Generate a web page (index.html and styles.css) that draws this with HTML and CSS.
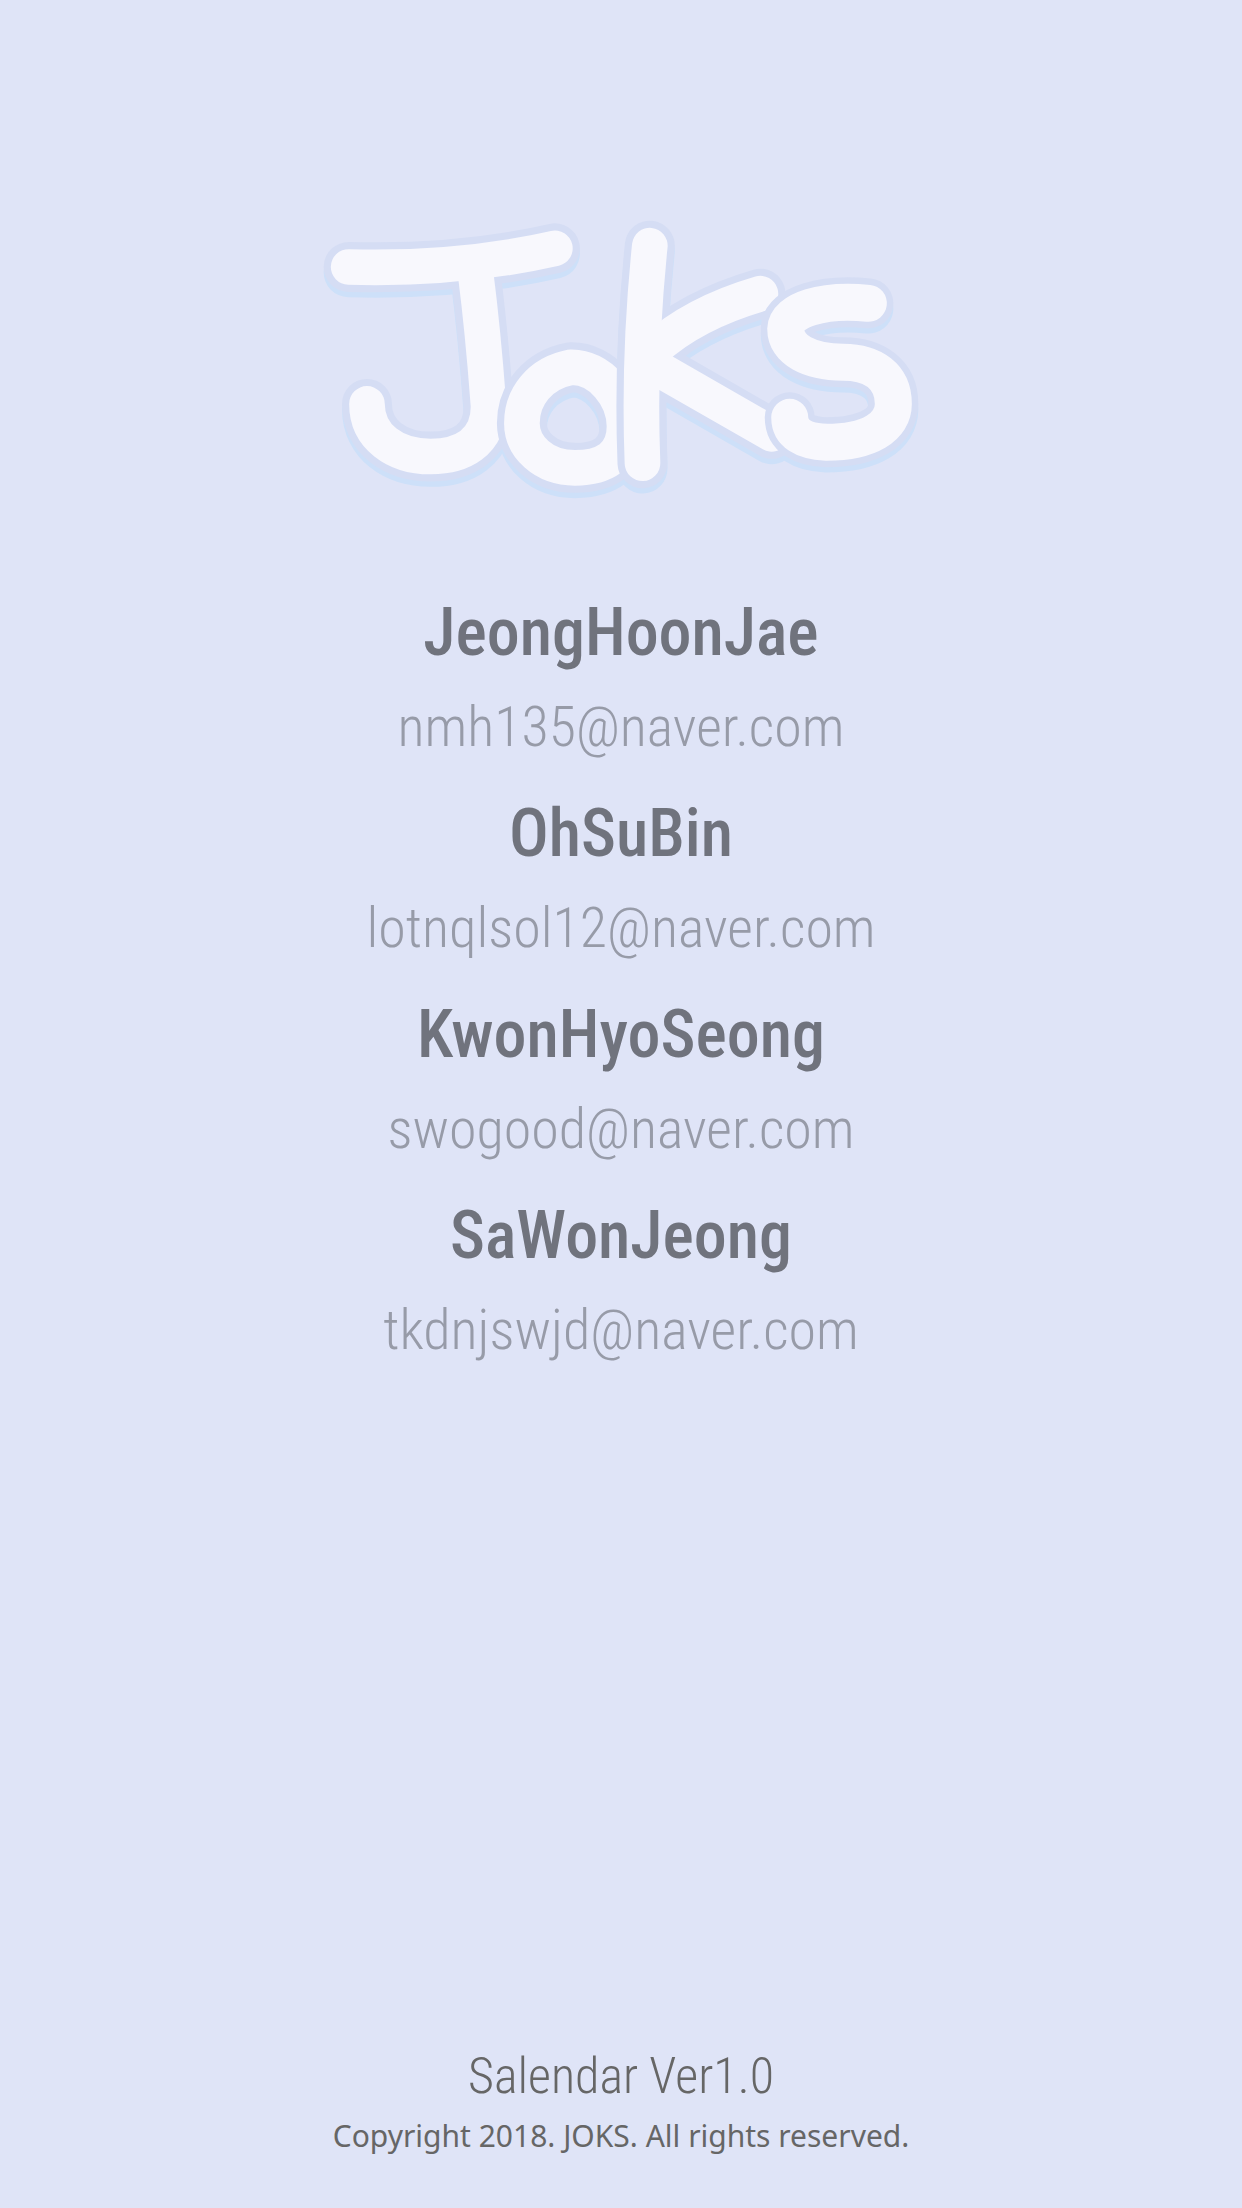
FILE: index.html
```html
<!DOCTYPE html>
<html lang="en">
<head>
<meta charset="utf-8">
<meta name="viewport" content="width=device-width, initial-scale=1">
<title>Salendar – About</title>
<link rel="stylesheet" href="styles.css">
</head>
<body>
<main class="about">
  <svg class="logo" viewBox="30 30 1810 850" role="img" aria-label="Joks">
    <defs>
      <g id="mark-j"><path d="M116 171Q450 180 735 115"/><path d="M497 190C520 370 527 470 536 590C536 700 455 740 362 740C255 740 171 680 171 582"/></g>
      <path id="mark-o" d="M783 472C690 490 636 560 636 640C636 710 700 774 795 774C880 774 944 740 944 650C944 560 870 470 783 472Z"/>
      <g id="mark-k"><path d="M1020 107C1000 300 988 500 998 760"/><path d="M1352 251Q1150 310 1030 420"/><path d="M1020 462L1386 672"/></g>
      <path id="mark-s" d="M1676 280C1540 266 1430 300 1428 357C1428 420 1500 457 1600 457C1690 457 1751 500 1751 582C1751 650 1680 697 1550 697C1480 694 1440 670 1440 622"/>
    </defs>
    <g class="logo-shadow" transform="translate(0 16)"><use href="#mark-j"/><use href="#mark-o"/><use href="#mark-k"/><use href="#mark-s"/></g>
    <use class="logo-edge" href="#mark-j"/><use class="logo-face" href="#mark-j"/>
    <use class="logo-edge" href="#mark-o"/><use class="logo-face" href="#mark-o"/>
    <use class="logo-edge" href="#mark-k"/><use class="logo-face" href="#mark-k"/>
    <use class="logo-edge" href="#mark-s"/><use class="logo-face logo-face-wide" href="#mark-s"/>
  </svg>
  <ul class="team">
    <li class="member"><h2 class="name">JeongHoonJae</h2><a class="email" href="mailto:nmh135@naver.com">nmh135@naver.com</a></li>
    <li class="member"><h2 class="name">OhSuBin</h2><a class="email" href="mailto:lotnqlsol12@naver.com">lotnqlsol12@naver.com</a></li>
    <li class="member"><h2 class="name">KwonHyoSeong</h2><a class="email" href="mailto:swogood@naver.com">swogood@naver.com</a></li>
    <li class="member"><h2 class="name">SaWonJeong</h2><a class="email" href="mailto:tkdnjswjd@naver.com">tkdnjswjd@naver.com</a></li>
  </ul>
</main>
<footer class="footer">
  <p class="version">Salendar Ver1.0</p>
  <p class="copyright">Copyright 2018. JOKS. All rights reserved.</p>
</footer>
</body>
</html>
```
FILE: styles.css
```css
* {
  box-sizing: border-box;
}

body {
  margin: 0;
  min-height: 100vh;
  display: flex;
  flex-direction: column;
  justify-content: space-between;
  background: #dfe4f7;
  font-family: "Roboto Condensed", Roboto, sans-serif;
  text-align: center;
}

.about {
  display: flex;
  flex-direction: column;
  align-items: center;
  padding: 220px 24px 48px;
}

.logo {
  width: 603px;
  max-width: 100%;
  height: auto;
  fill: none;
  stroke-linecap: round;
  stroke-linejoin: round;
}

.logo-shadow {
  stroke: #cde0f9;
  stroke-width: 150px;
}

.logo-edge {
  stroke: #d5ddf4;
  stroke-width: 150px;
}

.logo-face {
  stroke: #f8f8fd;
  stroke-width: 107px;
}

.logo-face-wide {
  stroke-width: 111px;
}

.team {
  list-style: none;
  margin: 78px 0 0;
  padding: 0;
}

.member {
  padding-bottom: 13px;
}

.name {
  margin: 0;
  font-size: 66px;
  line-height: 104px;
  font-weight: 500;
  color: #70737d;
}

.email {
  display: block;
  font-size: 56px;
  line-height: 84px;
  font-weight: 300;
  color: #979ba8;
  text-decoration: none;
}

.footer {
  padding: 0 24px 48px;
  color: #666;
}

.version {
  margin: 0;
  font-size: 50px;
  line-height: 72px;
  font-weight: 300;
}

.copyright {
  margin: 0;
  font-family: "Noto Sans", sans-serif;
  font-size: 30px;
  line-height: 48px;
}
```
